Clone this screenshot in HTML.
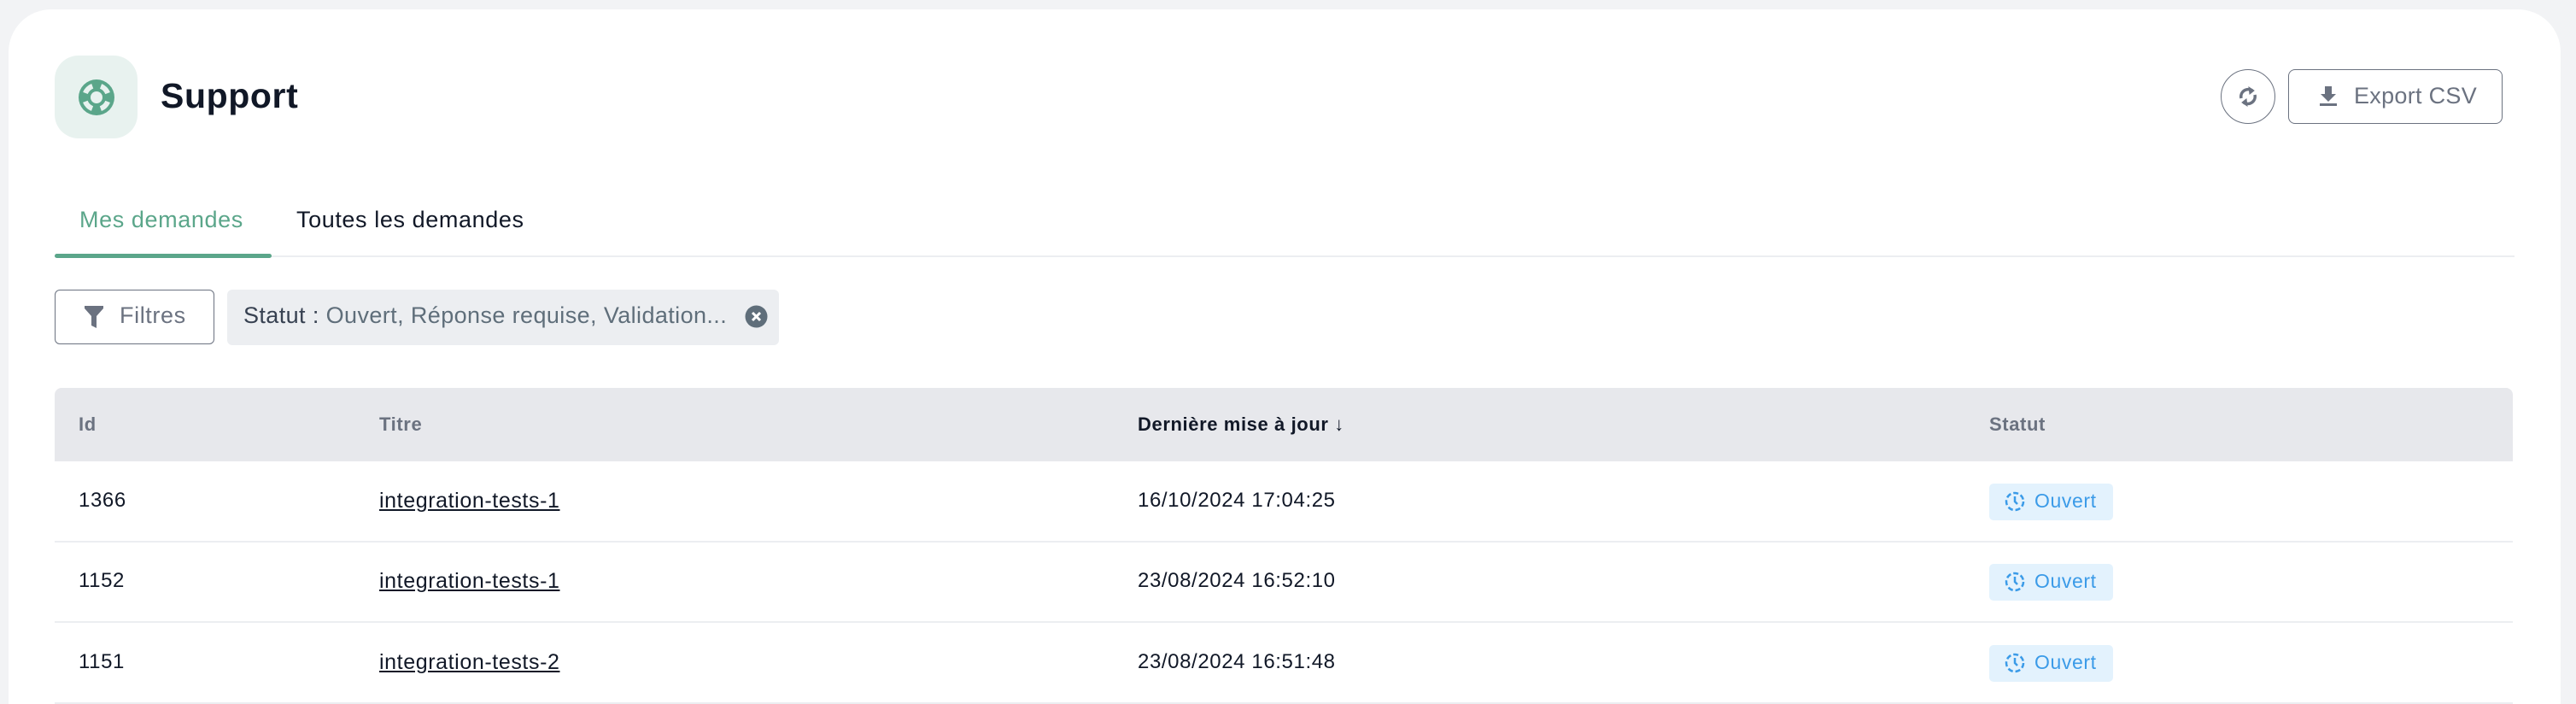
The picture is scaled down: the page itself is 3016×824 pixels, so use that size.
<!DOCTYPE html>
<html style="width:3016px;height:824px;overflow:hidden"><head><meta charset="utf-8"><style>
*{box-sizing:border-box;margin:0;padding:0}
body{width:3016px;height:824px;background:#f2f3f5;font-family:"Liberation Sans",sans-serif;overflow:hidden;position:relative}
.card{position:absolute;left:10px;top:11px;width:2988px;height:813px;background:#fff;border-radius:50px 50px 0 0}
.abs{position:absolute}
.t{white-space:nowrap;letter-spacing:0.6px}
</style></head><body>
<div class="card"></div>
<div class="abs" style="left:64px;top:65px;width:97px;height:97px;border-radius:28px;background:#e8f2ef"></div>
<svg class="abs" style="left:91px;top:92px" width="44" height="44" viewBox="0 0 44 44">
<circle cx="22" cy="22" r="21" fill="#5ba68a"/>
<circle cx="22" cy="22" r="14" fill="none" stroke="#e8f2ef" stroke-width="6" stroke-dasharray="12 10" stroke-dashoffset="6" transform="rotate(-45 22 22)"/>
<circle cx="22" cy="22" r="10" fill="#5ba68a"/>
<circle cx="22" cy="22" r="7" fill="#e8f2ef"/>
</svg>
<div class="abs t" style="left:188px;top:89px;font-size:41px;font-weight:bold;color:#111827">Support</div>

<div class="abs" style="left:2600px;top:81px;width:64px;height:64px;border:1.5px solid #6b7280;border-radius:50%"></div>
<svg class="abs" style="left:2619px;top:100px" width="26" height="26" viewBox="0 0 26 26" fill="none" stroke="#6b7280" stroke-width="3.5">
<path d="M5 15 A8.5 8.5 0 0 1 18 6"/><path d="M21 11 A8.5 8.5 0 0 1 8 20"/>
<path d="M14 2 L20 6 L15 10Z" fill="#6b7280" stroke-width="1"/><path d="M12 24 L6 20 L11 16Z" fill="#6b7280" stroke-width="1"/>
</svg>
<div class="abs" style="left:2679px;top:81px;width:251px;height:64px;border:1.5px solid #6b7280;border-radius:8px"></div>
<svg class="abs" style="left:2715px;top:101px" width="22" height="24" viewBox="0 0 22 24" fill="#6b7280"><path d="M7 0h8v9h5l-9 9-9-9h5z"/><rect x="1" y="20" width="20" height="3"/></svg>
<div class="abs t" style="left:2756px;top:97px;font-size:27px;color:#6b7280;letter-spacing:0.3px">Export CSV</div>

<div class="abs t" style="left:93px;top:242px;font-size:27px;color:#5ba68a">Mes demandes</div>
<div class="abs t" style="left:347px;top:242px;font-size:27px;color:#111827">Toutes les demandes</div>
<div class="abs" style="left:64px;top:299px;width:2880px;height:2px;background:#eceef1"></div>
<div class="abs" style="left:64px;top:297px;width:254px;height:5px;background:#5ba68a;border-radius:3px"></div>

<div class="abs" style="left:64px;top:339px;width:187px;height:64px;border:1.5px solid #6b7280;border-radius:6px"></div>
<svg class="abs" style="left:98px;top:358px" width="24" height="26" viewBox="0 0 24 26" fill="#6b7280"><path d="M1 0h22v3l-8 9v14l-6-3v-11l-8-9z"/></svg>
<div class="abs t" style="left:140px;top:354px;font-size:27px;color:#6b7280">Filtres</div>
<div class="abs" style="left:266px;top:339px;width:646px;height:65px;background:#eceef1;border-radius:6px"></div>
<div class="abs t" style="left:285px;top:354px;font-size:27px;color:#374151;letter-spacing:0.4px">Statut : <span style="color:#5f6e7a">Ouvert, Réponse requise, Validation...</span></div>
<svg class="abs" style="left:872px;top:357px" width="27" height="27" viewBox="0 0 27 27"><circle cx="13.5" cy="13.5" r="13" fill="#5f6e7a"/><path d="M9 9l9 9M18 9l-9 9" stroke="#fff" stroke-width="3"/></svg>

<div class="abs" style="left:64px;top:454px;width:2878px;height:86px;background:#e7e8ec;border-radius:8px 8px 0 0"></div>
<div class="abs t" style="left:92px;top:484px;font-size:22px;font-weight:bold;color:#6b7280">Id</div>
<div class="abs t" style="left:444px;top:484px;font-size:22px;font-weight:bold;color:#6b7280">Titre</div>
<div class="abs t" style="left:1332px;top:484px;font-size:22px;font-weight:bold;color:#111827">Dernière mise à jour ↓</div>
<div class="abs t" style="left:2329px;top:484px;font-size:22px;font-weight:bold;color:#6b7280">Statut</div>

<div class="abs" style="left:64px;top:633px;width:2878px;height:2px;background:#eceef1"></div>
<div class="abs" style="left:64px;top:727px;width:2878px;height:2px;background:#eceef1"></div>
<div class="abs" style="left:64px;top:822px;width:2878px;height:2px;background:#eceef1"></div>

<div class="abs t" style="left:92px;top:572px;font-size:24px;color:#111827">1366</div>
<div class="abs t" style="left:444px;top:572px;font-size:25px;color:#111827;text-decoration:underline">integration-tests-1</div>
<div class="abs t" style="left:1332px;top:572px;font-size:24px;color:#111827">16/10/2024 17:04:25</div>
<div class="abs t" style="left:92px;top:666px;font-size:24px;color:#111827">1152</div>
<div class="abs t" style="left:444px;top:666px;font-size:25px;color:#111827;text-decoration:underline">integration-tests-1</div>
<div class="abs t" style="left:1332px;top:666px;font-size:24px;color:#111827">23/08/2024 16:52:10</div>
<div class="abs t" style="left:92px;top:761px;font-size:24px;color:#111827">1151</div>
<div class="abs t" style="left:444px;top:761px;font-size:25px;color:#111827;text-decoration:underline">integration-tests-2</div>
<div class="abs t" style="left:1332px;top:761px;font-size:24px;color:#111827">23/08/2024 16:51:48</div>

<div class="abs" style="left:2329px;top:566px;width:145px;height:43px;background:#e3f2fd;border-radius:5px"></div>
<div class="abs" style="left:2329px;top:660px;width:145px;height:43px;background:#e3f2fd;border-radius:5px"></div>
<div class="abs" style="left:2329px;top:755px;width:145px;height:43px;background:#e3f2fd;border-radius:5px"></div>
<svg class="abs" style="left:2347px;top:574px" width="24" height="26" viewBox="0 0 24 26" fill="none" stroke="#3b9be8" stroke-width="2.5"><circle cx="12" cy="13" r="10" stroke-dasharray="6 3"/><path d="M12 7v6l3 3"/></svg>
<svg class="abs" style="left:2347px;top:668px" width="24" height="26" viewBox="0 0 24 26" fill="none" stroke="#3b9be8" stroke-width="2.5"><circle cx="12" cy="13" r="10" stroke-dasharray="6 3"/><path d="M12 7v6l3 3"/></svg>
<svg class="abs" style="left:2347px;top:763px" width="24" height="26" viewBox="0 0 24 26" fill="none" stroke="#3b9be8" stroke-width="2.5"><circle cx="12" cy="13" r="10" stroke-dasharray="6 3"/><path d="M12 7v6l3 3"/></svg>
<div class="abs t" style="left:2382px;top:573px;font-size:23px;color:#3b9be8">Ouvert</div>
<div class="abs t" style="left:2382px;top:667px;font-size:23px;color:#3b9be8">Ouvert</div>
<div class="abs t" style="left:2382px;top:762px;font-size:23px;color:#3b9be8">Ouvert</div>
</body></html>
